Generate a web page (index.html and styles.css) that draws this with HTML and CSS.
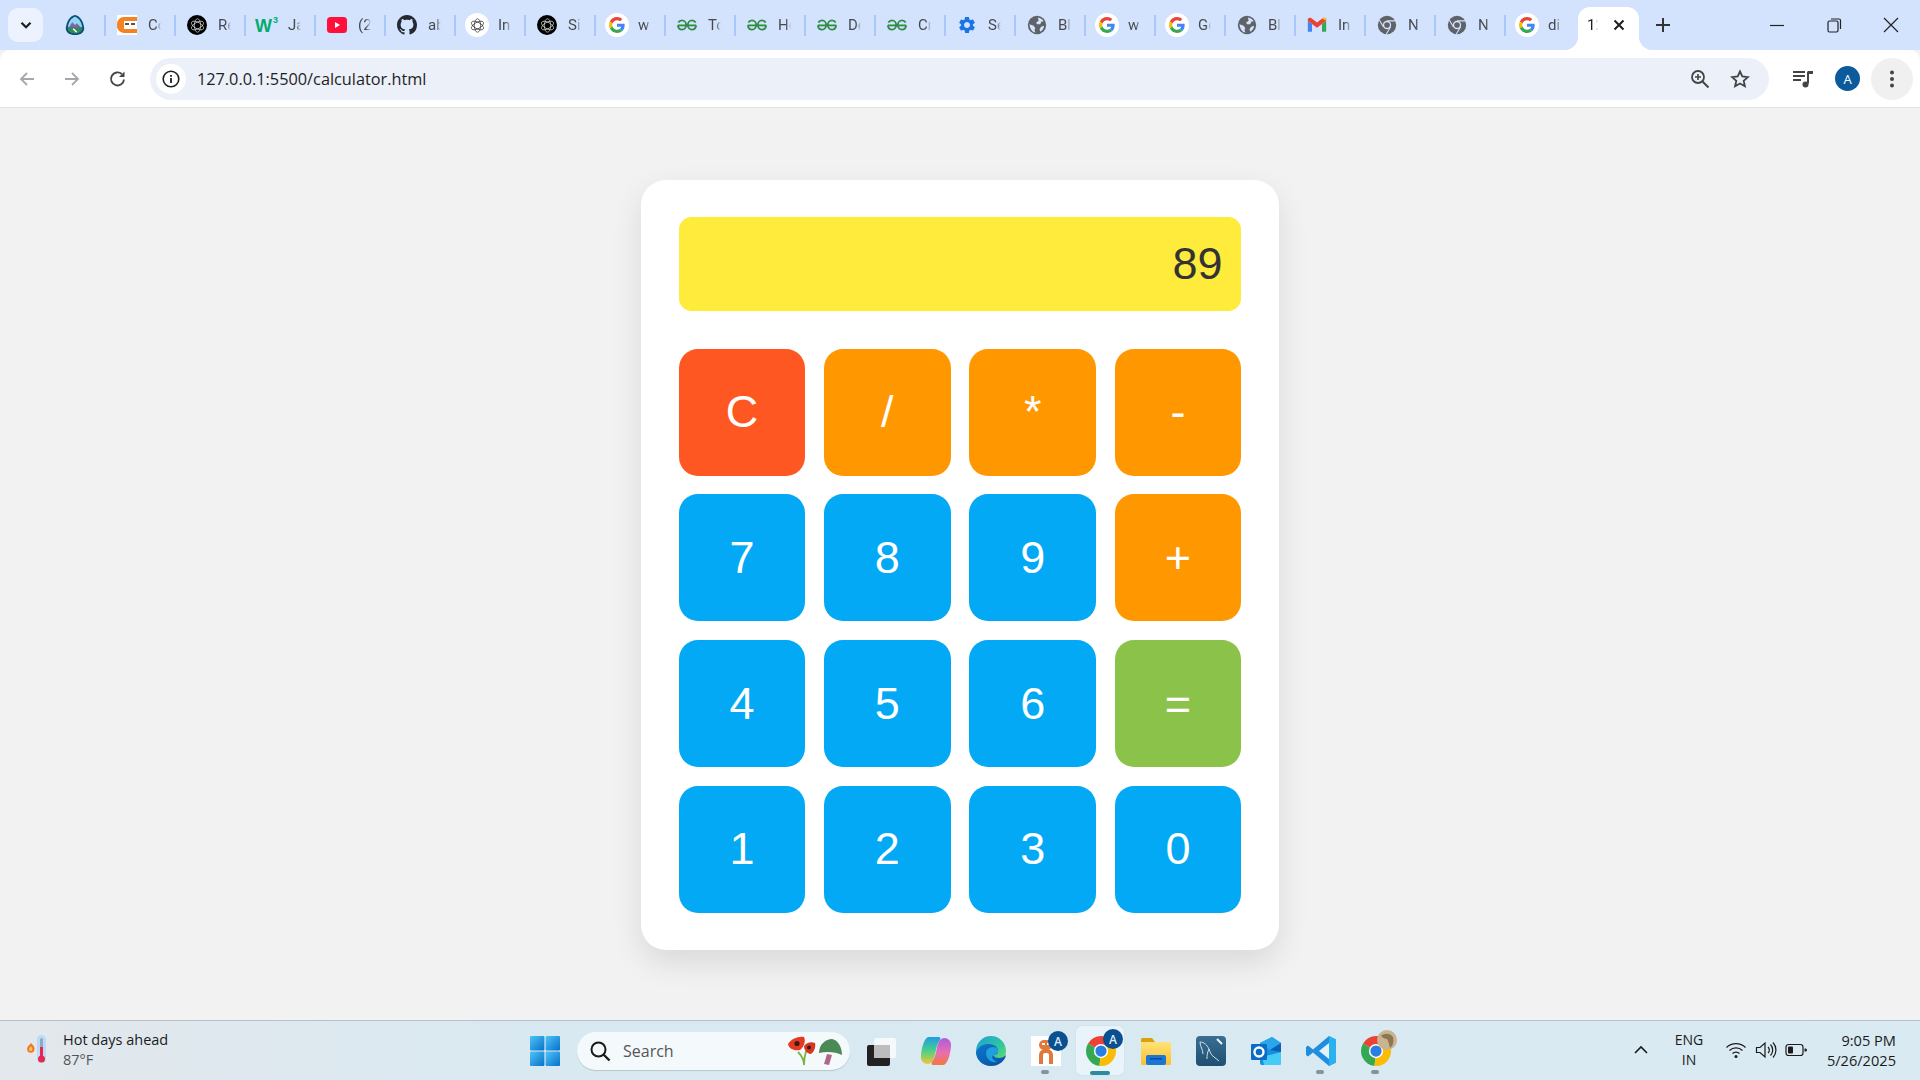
FILE: index.html
```html
<!DOCTYPE html>
<html lang="en">
<head>
<meta charset="utf-8">
<title>Calculator</title>
<link rel="stylesheet" href="styles.css">
</head>
<body>
<svg class="sprite" width="0" height="0" aria-hidden="true">
  <defs>
    <symbol id="openai" viewBox="0 0 24 24"><g fill="none" stroke="currentColor" stroke-width=".9"><ellipse cx="12" cy="12" rx="4" ry="8.500"/><ellipse cx="12" cy="12" rx="4" ry="8.500" transform="rotate(60 12 12)"/><ellipse cx="12" cy="12" rx="4" ry="8.500" transform="rotate(120 12 12)"/></g></symbol>
    <symbol id="google" viewBox="0 0 48 48"><path fill="#EA4335" d="M24 9.5c3.54 0 6.71 1.22 9.21 3.6l6.85-6.85C35.9 2.38 30.47 0 24 0 14.62 0 6.51 5.38 2.56 13.22l7.98 6.19C12.43 13.72 17.74 9.5 24 9.5z"/><path fill="#4285F4" d="M46.98 24.55c0-1.57-.15-3.09-.38-4.55H24v9.02h12.94c-.58 2.96-2.26 5.48-4.78 7.18l7.73 6c4.51-4.18 7.09-10.36 7.09-17.65z"/><path fill="#FBBC05" d="M10.53 28.59c-.48-1.45-.76-2.99-.76-4.59s.27-3.14.76-4.59l-7.98-6.19C.92 16.46 0 20.12 0 24c0 3.88.92 7.54 2.56 10.78l7.97-6.19z"/><path fill="#34A853" d="M24 48c6.48 0 11.93-2.13 15.89-5.81l-7.73-6c-2.15 1.45-4.92 2.3-8.16 2.3-6.26 0-11.57-4.22-13.47-9.91l-7.98 6.19C6.51 42.62 14.62 48 24 48z"/></symbol>
    <symbol id="gfg" viewBox="0 0 24 24"><g fill="none" stroke="#2f8d46" stroke-width="2.200"><path d="M1 12.500h22"/><path d="M1.600 9C2.600 7.300 4 6.500 6 6.500c3 0 5 2.400 5 5.500s-2 5.500-5 5.500c-2.500 0-4.500-1.800-5-5"/><path d="M22.400 9c-1-1.700-2.400-2.500-4.400-2.500-3 0-5 2.400-5 5.500s2 5.500 5 5.500c2.500 0 4.500-1.800 5-5"/></g></symbol>
    <symbol id="gear" viewBox="0 0 24 24"><path fill="#1a73e8" d="M19.140 12.940c.04-.3.06-.61.06-.94 0-.32-.02-.64-.07-.94l2.030-1.580c.18-.14.23-.41.12-.61l-1.920-3.320c-.12-.22-.37-.29-.59-.22l-2.390.96c-.5-.38-1.030-.7-1.620-.94l-.36-2.540c-.04-.24-.24-.41-.48-.41h-3.840c-.24 0-.43.17-.47.41l-.36 2.540c-.59.24-1.130.57-1.620.94l-2.390-.96c-.22-.08-.47 0-.59.22L2.740 8.870c-.12.21-.08.47.12.61l2.030 1.580c-.05.3-.09.63-.09.94s.02.64.07.94l-2.030 1.580c-.18.14-.23.41-.12.61l1.920 3.320c.12.22.37.29.59.22l2.390-.96c.5.38 1.030.7 1.620.94l.36 2.540c.05.24.24.41.48.41h3.840c.24 0 .44-.17.47-.41l.36-2.540c.59-.24 1.130-.56 1.620-.94l2.390.96c.22.08.47 0 .59-.22l1.920-3.320c.12-.22.07-.47-.12-.61l-2.010-1.580zM12 15.600c-1.980 0-3.600-1.620-3.600-3.600s1.620-3.600 3.600-3.600 3.600 1.620 3.600 3.600-1.620 3.600-3.600 3.600z"/></symbol>
    <symbol id="globe" viewBox="0 0 24 24"><circle cx="12" cy="12" r="11" fill="#5f6368"/><path fill="#d3e3fd" d="M13 3c3 .4 5.500 2 7 4.500l-3 .5-1 3h-4l-1-2 3-2zM3 11l5 2 2 3-1 2 1 3C6 20.500 3.300 16 3 11zM17 14l3.500-1c-.2 3-1.800 5.500-4.500 7l-1-3z"/></symbol>
    <symbol id="chromegray" viewBox="0 0 24 24"><circle cx="12" cy="12" r="11" fill="#5f6368"/><circle cx="12" cy="12" r="5" fill="#d3e3fd"/><circle cx="12" cy="12" r="3.400" fill="#5f6368"/><path stroke="#d3e3fd" stroke-width="1.300" fill="none" d="M12 7h10M7.700 14.500 2.800 6M16.300 14.500 11 23"/></symbol>
    <symbol id="gmail" viewBox="0 0 24 24"><path fill="#4285f4" d="M1 20V7l5 3.800V20H2.500A1.500 1.500 0 0 1 1 20z"/><path fill="#34a853" d="M23 20V7l-5 3.800V20h3.500a1.500 1.500 0 0 0 1.500 0z"/><path fill="#ea4335" d="M6 10.800 1 7V5.500C1 3.500 3.300 2.500 5 3.700L12 9l7-5.300c1.700-1.200 4-.2 4 1.800V7l-5 3.800-6 4.600z"/><path fill="#fbbc04" d="M18 4.500 23 7V5.500c0-2-2.300-3-4-1.800z"/></symbol>
    <symbol id="chrome" viewBox="0 0 48 48"><path fill="#ea4335" d="M24 24 6.680 14A20 20 0 0 1 41.320 14z"/><path fill="#34a853" d="M24 24 6.680 14A20 20 0 0 0 22 43.900z"/><path fill="#fbbc04" d="M24 24 41.320 14A20 20 0 0 1 22 43.900z"/><circle cx="24" cy="24" r="9.500" fill="#fff"/><circle cx="24" cy="24" r="7.500" fill="#2a7de1"/></symbol>
    <linearGradient id="edgeA" x1="0" y1="0" x2="1" y2="1"><stop offset="0" stop-color="#1e9fdc"/><stop offset=".55" stop-color="#2fc6a0"/><stop offset="1" stop-color="#7be15a"/></linearGradient>
    <linearGradient id="edgeB" x1="0" y1="0" x2="1" y2="1"><stop offset="0" stop-color="#0c78cf"/><stop offset="1" stop-color="#0a4f9e"/></linearGradient>
    <linearGradient id="copA" x1="0" y1="0" x2="0" y2="1"><stop offset="0" stop-color="#1f9ce6"/><stop offset=".5" stop-color="#47d08a"/><stop offset="1" stop-color="#f3c531"/></linearGradient>
    <linearGradient id="copB" x1="0" y1="0" x2="0" y2="1"><stop offset="0" stop-color="#b05ae0"/><stop offset=".55" stop-color="#e86fb0"/><stop offset="1" stop-color="#f5773c"/></linearGradient>
    <linearGradient id="folder" x1="0" y1="0" x2="0" y2="1"><stop offset="0" stop-color="#ffe27a"/><stop offset="1" stop-color="#fbc02d"/></linearGradient>
    <linearGradient id="mysql" x1="0" y1="0" x2="0" y2="1"><stop offset="0" stop-color="#3a6f92"/><stop offset="1" stop-color="#1f4f72"/></linearGradient>
    <linearGradient id="winlogo" x1="0" y1="0" x2="1" y2="1"><stop offset="0" stop-color="#4fc3f7"/><stop offset="1" stop-color="#0672cb"/></linearGradient>
  </defs>
</svg>

<header class="tabstrip">
  <button class="tablist" aria-label="Search tabs"><svg class="i18" viewBox="0 0 16 16"><path d="M4 6l4 4 4-4" fill="none" stroke="#1f1f1f" stroke-width="2"/></svg></button>
  <div class="pinned">
    <svg class="fav-lg" viewBox="0 0 24 24"><path d="M12 1C7 2 3 7 2 15c-.5 5 4 8 10 8s10.500-3 10-8C21 7 17 2 12 1z" fill="#0b4f7f"/><path d="M12 3C8 4.500 5 8 4.200 14.500h15.600C19 8 16 4.500 12 3z" fill="#8fd6f0"/><path d="M5 15l4-6 3 3 2-2 5 5z" fill="#8a5fb0"/><path d="M4 14.500h16c.5 4-3 6.700-8 6.700s-8.500-2.700-8-6.700z" fill="#2e8b57"/><path d="M10 16l4 4" stroke="#fff" stroke-width="1.500"/></svg>
  </div>
  <div class="tab"><svg class="fav" viewBox="0 0 20 20"><rect width="20" height="20" fill="#fff"/><path d="M20 2H7a7 7 0 0 0-7 8 7 7 0 0 0 7 8h13v-4H7V6h13z" fill="#f58220"/><rect x="7" y="6" width="13" height="8" fill="#fff"/><rect x="8" y="8" width="4" height="2" fill="#555"/><rect x="14" y="8" width="4" height="2" fill="#555"/></svg><span class="title">Co</span></div>
  <div class="tab"><span class="favdisc dark"><svg viewBox="0 0 24 24"><use href="#openai"/></svg></span><span class="title">Re</span></div>
  <div class="tab"><svg class="fav-w3" viewBox="0 0 24 20"><text x="0" y="17" class="w3w">W</text><text x="18" y="8" class="w3n">3</text></svg><span class="title">Ja</span></div>
  <div class="tab"><svg class="fav" viewBox="0 0 20 20"><rect y="2" width="20" height="16" rx="3.500" fill="#ff0f3a"/><path d="M8 7l5 3-5 3z" fill="#fff"/></svg><span class="title">(2</span></div>
  <div class="tab"><svg class="fav" viewBox="0 0 16 16"><path fill="#24292f" d="M8 0C3.580 0 0 3.580 0 8c0 3.540 2.290 6.530 5.470 7.590.4.070.55-.17.55-.38 0-.19-.01-.82-.01-1.490-2.010.37-2.530-.49-2.690-.94-.09-.23-.48-.94-.82-1.130-.28-.15-.68-.52-.01-.53.63-.01 1.080.58 1.230.82.72 1.210 1.870.87 2.330.66.07-.52.28-.87.51-1.070-1.780-.2-3.640-.89-3.640-3.950 0-.87.31-1.590.82-2.150-.08-.2-.36-1.020.08-2.120 0 0 .67-.21 2.200.82.64-.18 1.320-.27 2-.27.68 0 1.360.09 2 .27 1.530-1.040 2.200-.82 2.200-.82.44 1.100.16 1.920.08 2.120.51.56.82 1.270.82 2.150 0 3.070-1.870 3.750-3.650 3.950.29.25.54.73.54 1.480 0 1.070-.01 1.930-.01 2.200 0 .21.15.46.55.38A8.013 8.013 0 0 0 16 8c0-4.420-3.580-8-8-8z"/></svg><span class="title">ab</span></div>
  <div class="tab"><span class="favdisc light"><svg viewBox="0 0 24 24"><use href="#openai"/></svg></span><span class="title">In</span></div>
  <div class="tab"><span class="favdisc dark"><svg viewBox="0 0 24 24"><use href="#openai"/></svg></span><span class="title">Si</span></div>
  <div class="tab"><span class="favdisc light"><svg class="g" viewBox="0 0 48 48"><use href="#google"/></svg></span><span class="title">w</span></div>
  <div class="tab"><svg class="fav" viewBox="0 0 24 24"><use href="#gfg"/></svg><span class="title">To</span></div>
  <div class="tab"><svg class="fav" viewBox="0 0 24 24"><use href="#gfg"/></svg><span class="title">He</span></div>
  <div class="tab"><svg class="fav" viewBox="0 0 24 24"><use href="#gfg"/></svg><span class="title">De</span></div>
  <div class="tab"><svg class="fav" viewBox="0 0 24 24"><use href="#gfg"/></svg><span class="title">Cr</span></div>
  <div class="tab"><svg class="fav" viewBox="0 0 24 24"><use href="#gear"/></svg><span class="title">Se</span></div>
  <div class="tab"><svg class="fav" viewBox="0 0 24 24"><use href="#globe"/></svg><span class="title">Bl</span></div>
  <div class="tab"><span class="favdisc light"><svg class="g" viewBox="0 0 48 48"><use href="#google"/></svg></span><span class="title">w</span></div>
  <div class="tab"><span class="favdisc light"><svg class="g" viewBox="0 0 48 48"><use href="#google"/></svg></span><span class="title">Go</span></div>
  <div class="tab"><svg class="fav" viewBox="0 0 24 24"><use href="#globe"/></svg><span class="title">Bl</span></div>
  <div class="tab"><svg class="fav" viewBox="0 0 24 24"><use href="#gmail"/></svg><span class="title">In</span></div>
  <div class="tab"><svg class="fav" viewBox="0 0 24 24"><use href="#chromegray"/></svg><span class="title">N</span></div>
  <div class="tab"><svg class="fav" viewBox="0 0 24 24"><use href="#chromegray"/></svg><span class="title">N</span></div>
  <div class="tab"><span class="favdisc light"><svg class="g" viewBox="0 0 48 48"><use href="#google"/></svg></span><span class="title">di</span></div>
  <div class="tab active"><span class="title">12</span><svg class="i16" viewBox="0 0 16 16"><path d="M3.500 3.500l9 9M12.500 3.500l-9 9" stroke="#1f1f1f" stroke-width="2"/></svg></div>
  <button class="newtab" aria-label="New tab"><svg class="i18" viewBox="0 0 18 18"><path d="M9 2v14M2 9h14" stroke="#333" stroke-width="2"/></svg></button>
  <div class="winctl">
    <svg class="i18" viewBox="0 0 18 18"><path d="M2 9.500h14" stroke="#222" stroke-width="1.200"/></svg>
    <svg class="i18" viewBox="0 0 18 18"><rect x="3" y="5" width="10" height="11" rx="1.500" fill="none" stroke="#222" stroke-width="1.200"/><path d="M6 3h8a1.500 1.500 0 0 1 1.500 1.500V13" fill="none" stroke="#222" stroke-width="1.200"/></svg>
    <svg class="i18" viewBox="0 0 18 18"><path d="M2 2l14 14M16 2L2 16" stroke="#222" stroke-width="1.200"/></svg>
  </div>
</header>

<nav class="toolbar">
  <span class="navbtn"><svg class="i20" viewBox="0 0 20 20"><path d="M17 10H4M10 4l-6 6 6 6" fill="none" stroke="#a4a8ad" stroke-width="1.800"/></svg></span>
  <span class="navbtn"><svg class="i20" viewBox="0 0 20 20"><path d="M3 10h13M10 4l6 6-6 6" fill="none" stroke="#a4a8ad" stroke-width="1.800"/></svg></span>
  <span class="navbtn"><svg class="i20" viewBox="0 0 20 20"><path d="M17 10.500A6.500 6.500 0 1 1 14.800 5" fill="none" stroke="#454545" stroke-width="1.900"/><path d="M17.500 2.500v5.500H12z" fill="#454545"/></svg></span>
  <div class="omnibox">
    <span class="chip"><svg class="i20" viewBox="0 0 20 20"><circle cx="10" cy="10" r="7.800" fill="none" stroke="#1f1f1f" stroke-width="1.600"/><path d="M10 9v5M10 6v1.800" stroke="#1f1f1f" stroke-width="1.800"/></svg></span>
    <span class="url">127.0.0.1:5500/calculator.html</span>
    <span class="omniicons">
      <svg class="i22" viewBox="0 0 22 22"><circle cx="9" cy="9" r="6" fill="none" stroke="#444" stroke-width="1.800"/><path d="M13.500 13.500l6 6" stroke="#444" stroke-width="2"/><path d="M9 6v6M6 9h6" stroke="#444" stroke-width="1.600"/></svg>
      <svg class="i22" viewBox="0 0 22 22"><path d="M11 3.500l2.300 5 5.500.6-4.100 3.700 1.200 5.400L11 15.500l-4.900 2.700 1.200-5.400-4.100-3.700 5.500-.6z" fill="none" stroke="#444" stroke-width="1.800"/></svg>
    </span>
  </div>
  <span class="navbtn media"><svg class="i22" viewBox="0 0 22 22"><path d="M1 4h12M1 8h12M1 12h8" stroke="#444" stroke-width="1.800"/><path d="M16 3.500v12" stroke="#444" stroke-width="2"/><path d="M16 3h5v3h-5z" fill="#444"/><circle cx="13.500" cy="16.500" r="3" fill="#444"/></svg></span>
  <span class="avatar">A</span>
  <span class="menu"><svg class="i20" viewBox="0 0 20 20"><circle cx="10" cy="3.500" r="2" fill="#444"/><circle cx="10" cy="10" r="2" fill="#444"/><circle cx="10" cy="16.500" r="2" fill="#444"/></svg></span>
</nav>

<main class="page">
  <section class="calculator">
    <div class="display">89</div>
    <div class="keys">
      <button class="key clear">C</button>
      <button class="key op">/</button>
      <button class="key op">*</button>
      <button class="key op">-</button>
      <button class="key">7</button>
      <button class="key">8</button>
      <button class="key">9</button>
      <button class="key op">+</button>
      <button class="key">4</button>
      <button class="key">5</button>
      <button class="key">6</button>
      <button class="key equals">=</button>
      <button class="key">1</button>
      <button class="key">2</button>
      <button class="key">3</button>
      <button class="key">0</button>
    </div>
  </section>
</main>

<footer class="taskbar">
  <div class="weather">
    <svg class="thermo" viewBox="0 0 24 32"><path d="M6 9c2 2 3.500 3.500 3.500 6a3.700 3.700 0 0 1-7.400 0c0-2.500 2-3.500 3.900-6z" fill="#f4762d"/><path d="M5.800 12.500c.8.8 1.600 1.600 1.600 2.800a1.600 1.600 0 0 1-3.200 0c0-1.200.8-2 1.600-2.800z" fill="#fcd34d"/><rect x="12" y="1" width="9" height="28" rx="4.500" fill="#bcdcf5"/><rect x="15" y="4" width="3" height="22" rx="1.500" fill="#8fa9c7"/><rect x="15" y="13" width="3" height="13" fill="#e8274f"/><circle cx="16.500" cy="25" r="3.500" fill="#e8274f"/></svg>
    <div class="weathertext"><span class="wt1">Hot days ahead</span><span class="wt2">87°F</span></div>
  </div>
  <span class="start"><svg class="winicon" viewBox="0 0 30 30"><rect width="14.400" height="14.400" rx="1" fill="url(#winlogo)"/><rect x="15.600" width="14.400" height="14.400" rx="1" fill="url(#winlogo)"/><rect y="15.600" width="14.400" height="14.400" rx="1" fill="url(#winlogo)"/><rect x="15.600" y="15.600" width="14.400" height="14.400" rx="1" fill="url(#winlogo)"/></svg></span>
  <div class="search">
    <svg class="i22" viewBox="0 0 22 22"><circle cx="9.500" cy="9.500" r="7" fill="none" stroke="#1b1b1b" stroke-width="2"/><path d="M14.500 14.500l6 6" stroke="#1b1b1b" stroke-width="2.400"/></svg>
    <span class="searchtext">Search</span>
    <svg class="searchart" viewBox="0 0 54 30"><path d="M16 29c0-6 1-10 2-14M16 29c0-6-3-10-6-13" fill="none" stroke="#7cb342" stroke-width="1.800"/><path d="M0 8c3-5 10-8 16-7 2 4 0 10-4 13C6 15 1 13 0 8z" fill="#e53923"/><circle cx="9" cy="7.500" r="2.600" fill="#3a1c12"/><path d="M16 10c2-3 7-5 11-3 1 4-1 9-4 11-4 0-7-4-7-8z" fill="#d8371f"/><circle cx="21" cy="11.500" r="2" fill="#3a1c12"/><path d="M31 17C31 8 38 3 44 3c6 1 10 8 10 16-6-3-15-4-23-2z" fill="#4b8a57"/><path d="M39 18l5 1-3 10-5-1z" fill="#b0668a"/></svg>
  </div>
  <div class="taskitem"><svg class="tb" viewBox="0 0 40 40"><rect x="6" y="14" width="23" height="21" rx="2" fill="#222"/><rect x="13" y="7" width="22" height="20" rx="2" fill="#fff" fill-opacity=".72"/><rect x="13" y="14" width="16" height="13" fill="#bdbdbd"/></svg></div>
  <div class="taskitem"><svg class="tb" viewBox="0 0 40 40"><path d="M13 6h9c3 0 3 2 1.500 4-2 2.500-3 6-4 11-1.200 7-3.500 12-8 12-3.500 0-6.500-3-6.500-6.500C5 19 8 6 13 6z" fill="url(#copA)"/><path d="M27 34h-9c-3 0-3-2-1.500-4 2-2.500 3-6 4-11 1.200-7 3.500-12 8-12 3.500 0 6.500 3 6.500 6.500C35 21 32 34 27 34z" fill="url(#copB)"/></svg></div>
  <div class="taskitem"><svg class="tb" viewBox="0 0 40 40"><circle cx="20" cy="20" r="15" fill="url(#edgeA)"/><path d="M5 21c2-5 7-8 12-8 6 0 10 3 10 7 0 3-2 4-5 4 1 2 3 3 6 3 3 0 5-1 7-3-1 6-7 11-15 11-9 0-15-7-15-14z" fill="url(#edgeB)"/><path d="M15 22c0-3 3-6 7-6 3 0 5 2 5 4 0 2-2 4-5 4-2 3 0 5 4 7-6 1-11-3-11-9z" fill="#1fa0dd"/></svg></div>
  <div class="taskitem hasdot"><svg class="tb" viewBox="0 0 40 40"><rect x="5" y="5" width="30" height="30" fill="#fff"/><rect x="13" y="9" width="13" height="10" rx="5" fill="#e0793a"/><rect x="16" y="12" width="3" height="2" fill="#fff"/><rect x="21" y="12" width="3" height="2" fill="#fff"/><path d="M15 33V24a4 4 0 0 1 4-4h2a4 4 0 0 1 4 4v9" fill="none" stroke="#e0793a" stroke-width="4"/><circle cx="32" cy="10" r="10" fill="#0a4f8f"/><text x="32" y="14.500" class="badge">A</text></svg></div>
  <div class="taskitem current"><svg class="tb" viewBox="0 0 40 40"><use href="#chrome" x="2" y="2" width="36" height="36"/><circle cx="32" cy="8" r="10" fill="#0a4f8f"/><text x="32" y="12.500" class="badge">A</text></svg></div>
  <div class="taskitem"><svg class="tb" viewBox="0 0 40 40"><path d="M5 8a2 2 0 0 1 2-1h9l3 4h-14z" fill="#dd9f0b"/><rect x="5" y="11" width="30" height="23" rx="1" fill="url(#folder)"/><rect x="10" y="24" width="20" height="10" rx="2" fill="#1976d2"/><rect x="14" y="27" width="12" height="1.500" fill="#0d47a1"/></svg></div>
  <div class="taskitem"><svg class="tb" viewBox="0 0 40 40"><rect x="5" y="5" width="30" height="30" rx="4" fill="url(#mysql)"/><path d="M9 11c4 0 7 3 9 7 1 3 2 6 5 8M9 11c0 5 3 7 3 12M18 18c-2 4-2 7-2 10M23 26l5 4" fill="none" stroke="#cfe0ea" stroke-width="1"/><path d="M26 8l5 5" stroke="#eef5f9" stroke-width="2"/></svg></div>
  <div class="taskitem"><svg class="tb" viewBox="0 0 40 40"><path d="M14 12l12-6 9 6v20a2 2 0 0 1-2 2H16a2 2 0 0 1-2-2z" fill="#1490df"/><path d="M14 12l12-6 9 6-11 7z" fill="#28a8ea"/><path d="M24 19l11-7v9z" fill="#0f5fb3"/><path d="M16 26l19-5v11a2 2 0 0 1-2 2H18z" fill="#45cbf5"/><rect x="5" y="13" width="16" height="16" rx="1" fill="#0b6cc7"/><circle cx="13" cy="21" r="4.500" fill="none" stroke="#fff" stroke-width="2.400"/></svg></div>
  <div class="taskitem hasdot"><svg class="tb" viewBox="0 0 40 40"><path d="M28 5l7 3.500v23L28 35 12 21.500 7 25.500l-2-1.500v-8l2-1.500 5 4z" fill="#1e8fe0"/><path d="M28 5v30l7-3.500v-23z" fill="#2ab1f0"/><path d="M28 12L18 20l10 8z" fill="#e3f1f8"/></svg></div>
  <div class="taskitem hasdot"><svg class="tb" viewBox="0 0 40 40"><use href="#chrome" x="2" y="2" width="36" height="36"/><circle cx="31" cy="9" r="10" fill="#c9b490"/><path d="M25 5c3-3 9-3 12 1 1 4 0 9-3 11-1-4-2-8-3-9-2 0-4-1-6-3z" fill="#8d7752"/></svg></div>
  <div class="tray">
    <span class="trayitem caret"><svg class="i20" viewBox="0 0 20 20"><path d="M4 13l6-6 6 6" fill="none" stroke="#1b1b1b" stroke-width="1.600"/></svg></span>
    <span class="lang"><span>ENG</span><span>IN</span></span>
    <span class="trayitem"><svg class="i22" viewBox="0 0 22 22"><path d="M1.500 8.500a13.500 13.500 0 0 1 19 0M4.500 11.500a9.500 9.500 0 0 1 13 0M7.500 14.500a5 5 0 0 1 7 0" fill="none" stroke="#1b1b1b" stroke-width="1.200"/><circle cx="11" cy="17.500" r="1.500" fill="#1b1b1b"/></svg></span>
    <span class="trayitem"><svg class="i22" viewBox="0 0 22 22"><path d="M1.500 8.500h3.500l5-4.500v14l-5-4.500H1.500z" fill="none" stroke="#1b1b1b" stroke-width="1.200"/><path d="M13 8a4 4 0 0 1 0 6M15.500 5.500a8 8 0 0 1 0 11M18 3.500a11 11 0 0 1 0 15" fill="none" stroke="#1b1b1b" stroke-width="1.200"/></svg></span>
    <span class="trayitem"><svg class="i22" viewBox="0 0 22 22"><rect x="1" y="5.500" width="17" height="11" rx="2.500" fill="none" stroke="#1b1b1b" stroke-width="1.200"/><rect x="3" y="7.500" width="5" height="7" rx="1" fill="#1b1b1b"/><path d="M19.500 9.500h1a1 1 0 0 1 0 3h-1z" fill="#1b1b1b"/></svg></span>
    <span class="clock"><span>9:05 PM</span><span>5/26/2025</span></span>
  </div>
</footer>
</body>
</html>
```

FILE: styles.css
```css
* { box-sizing: border-box; }
html, body { margin: 0; height: 100%; }
body {
  display: flex;
  flex-direction: column;
  height: 100vh;
  overflow: hidden;
  background: #f2f2f2;
  font-family: "Liberation Sans", Arial, sans-serif;
}
.sprite { position: absolute; }
button { border: 0; padding: 0; font: inherit; background: none; }
svg { display: block; flex: none; overflow: visible; }
.i16 { width: 16px; height: 16px; }
.i18 { width: 18px; height: 18px; }
.i20 { width: 20px; height: 20px; }
.i22 { width: 22px; height: 22px; }

/* tab strip */
.tabstrip {
  flex: none;
  display: flex;
  align-items: center;
  height: 50px;
  padding-left: 8px;
  background: #d3e3fd;
}
.tablist {
  display: flex;
  align-items: center;
  justify-content: center;
  width: 35px;
  height: 34px;
  border-radius: 10px;
  background: #ecf2fe;
}
.pinned {
  display: flex;
  justify-content: center;
  width: 61px;
  padding-left: 3px;
}
.fav { width: 20px; height: 20px; }
.fav-lg { width: 22px; height: 22px; }
.fav-w3 { width: 24px; height: 20px; margin-left: -2px; margin-right: -2px; }
.w3w { font: 700 18px "Liberation Sans", sans-serif; fill: #04aa6d; }
.w3n { font: 700 9px "Liberation Sans", sans-serif; fill: #04aa6d; }
.tab {
  display: flex;
  align-items: center;
  flex: none;
  width: 70px;
  height: 50px;
  padding-left: 13px;
  background: linear-gradient(#a8c7fa, #a8c7fa) left center / 2px 21px no-repeat;
}
.fav + .title, .favdisc + .title, .fav-w3 + .title { margin-left: 11px; }
.favdisc {
  display: flex;
  align-items: center;
  justify-content: center;
  flex: none;
  width: 20px;
  height: 20px;
  border-radius: 50%;
}
.favdisc svg { width: 19px; height: 19px; }
.favdisc .g { width: 16px; height: 16px; }
.favdisc.dark { background: #000; color: #d8d8d8; }
.favdisc.light { background: #fff; color: #333; box-shadow: 0 0 0 2px #fff; }
.title {
  display: block;
  width: 13px;
  overflow: hidden;
  white-space: nowrap;
  font: 15px/20px Roboto, sans-serif;
  color: #47494d;
  -webkit-mask-image: linear-gradient(90deg, #000 60%, transparent);
  mask-image: linear-gradient(90deg, #000 60%, transparent);
}
.tab.active {
  position: relative;
  align-self: flex-end;
  justify-content: space-between;
  width: 61px;
  height: 43px;
  margin-left: 4px;
  padding: 0 12px 7px 9px;
  border-radius: 12px 12px 0 0;
  background: #fff;
}
.tab.active::before, .tab.active::after {
  content: "";
  position: absolute;
  bottom: 0;
  width: 14px;
  height: 14px;
}
.tab.active::before { left: -14px; background: radial-gradient(circle at 0 0, transparent 14px, #fff 14.500px); }
.tab.active::after { right: -14px; background: radial-gradient(circle at 100% 0, transparent 14px, #fff 14.500px); }
.tab.active .title { color: #1f1f1f; width: 11px; }
.newtab { margin-left: 15px; width: 18px; height: 18px; }
.winctl {
  display: flex;
  align-items: center;
  gap: 39px;
  margin-left: auto;
  padding-right: 20px;
}

/* toolbar */
.toolbar {
  flex: none;
  display: flex;
  align-items: flex-start;
  height: 58px;
  padding: 8px 7px 0 5px;
  border-bottom: 1px solid #e1e3e1;
  border-radius: 10px 10px 0 0;
  background: #fff;
}
.navbtn {
  display: flex;
  align-items: center;
  justify-content: center;
  width: 45px;
  height: 42px;
}
.omnibox {
  display: flex;
  align-items: center;
  width: 1620px;
  height: 42px;
  margin-left: 10px;
  padding: 0 18px 0 6px;
  border-radius: 21px;
  background: #ebf0f9;
}
.chip {
  display: flex;
  align-items: center;
  justify-content: center;
  width: 30px;
  height: 30px;
  border-radius: 50%;
  background: #fff;
}
.url {
  margin-left: 11px;
  font: 16.3px "Open Sans", sans-serif;
  color: #1f1f1f;
}
.omniicons {
  display: flex;
  gap: 18px;
  margin-left: auto;
}
.media { margin-left: 11px; }
.avatar {
  display: flex;
  align-items: center;
  justify-content: center;
  width: 25px;
  height: 25px;
  margin: 8px 0 0 10px;
  border-radius: 50%;
  background: #0a5a9c;
  color: #fff;
  font: 13px "Open Sans", sans-serif;
}
.menu {
  display: flex;
  align-items: center;
  justify-content: center;
  width: 42px;
  height: 42px;
  margin-left: 11px;
  border-radius: 50%;
  background: #f0f0f0;
}

/* page */
.page {
  flex: 1;
  min-height: 0;
  display: flex;
  align-items: center;
  justify-content: center;
  padding-top: 2px;
}
.calculator {
  width: 637.5px;
  padding: 37.5px;
  border-radius: 25px;
  background: #fff;
  box-shadow: 0 12.5px 31px rgba(0, 0, 0, .1);
}
.display {
  height: 94px;
  margin-bottom: 37.5px;
  padding: 0 18.75px;
  border-radius: 12.5px;
  background: #ffeb3b;
  color: #333;
  font-size: 45px;
  line-height: 94px;
  text-align: right;
}
.keys {
  display: grid;
  grid-template-columns: repeat(4, 1fr);
  grid-auto-rows: 127px;
  gap: 18.75px;
}
.key {
  border-radius: 19px;
  background: #03a9f4;
  color: #fff;
  font-size: 45px;
  font-family: "Liberation Sans", Arial, sans-serif;
}
.key.clear { background: #ff5722; }
.key.op { background: #ff9800; }
.key.equals { background: #8bc34a; }

/* taskbar */
.taskbar {
  flex: none;
  display: flex;
  align-items: center;
  height: 60px;
  border-top: 1px solid #b6c1c8;
  background: linear-gradient(90deg, #e3e8ec 0, #d9e9f1 28%, #d9eaf2 100%);
  font-family: "Open Sans", sans-serif;
}
.weather {
  display: flex;
  align-items: center;
  gap: 12px;
  width: 517px;
  padding: 0 0 2px 25px;
}
.thermo { width: 24px; height: 32px; }
.weathertext { display: flex; flex-direction: column; margin-left: 2px; font-size: 14.5px; line-height: 20px; color: #1b1b1b; }
.wt2 { color: #555; }
.start {
  display: flex;
  justify-content: center;
  width: 55px;
}
.winicon { width: 30px; height: 30px; }
.search {
  display: flex;
  align-items: center;
  width: 273px;
  height: 38px;
  margin: 0 3px 0 5px;
  padding: 0 8px 0 12px;
  border-radius: 19px;
  background: #f4f9fc;
  box-shadow: 0 1px 1px rgba(0, 0, 0, .15);
}
.searchtext { margin-left: 12px; font-size: 16px; color: #555; }
.searchart { width: 54px; height: 30px; margin-left: auto; }
.taskitem {
  position: relative;
  display: flex;
  align-items: center;
  justify-content: center;
  width: 55px;
  height: 59px;
}
.tb { width: 40px; height: 40px; }
.badge { font: 600 12px "Open Sans", sans-serif; fill: #dbe9f5; text-anchor: middle; }
.taskitem.current::before {
  content: "";
  position: absolute;
  left: 3px;
  right: 4px;
  top: 5px;
  bottom: 5px;
  border-radius: 5px;
  background: #e9f4fa;
  box-shadow: 0 0 1px rgba(0, 0, 0, .2);
}
.taskitem.current .tb { position: relative; }
.taskitem.current::after {
  content: "";
  position: absolute;
  left: 17px;
  bottom: 5px;
  width: 20px;
  height: 4px;
  border-radius: 2px;
  background: #2a8a9e;
}
.hasdot::after {
  content: "";
  position: absolute;
  left: 23px;
  bottom: 6px;
  width: 8px;
  height: 4px;
  border-radius: 2px;
  background: #87939b;
}
.tray {
  display: flex;
  align-items: center;
  margin-left: auto;
  padding: 0 24px 2px 0;
  color: #1b1b1b;
  font-size: 14.6px;
  line-height: 20px;
}
.trayitem {
  display: flex;
  justify-content: center;
  width: 30px;
}
.caret { margin-right: 3px; }
.lang {
  display: flex;
  flex-direction: column;
  align-items: center;
  width: 60px;
  margin-right: 2px;
  font-size: 14px;
}
.clock {
  display: flex;
  flex-direction: column;
  align-items: flex-end;
  width: 85px;
}
```
